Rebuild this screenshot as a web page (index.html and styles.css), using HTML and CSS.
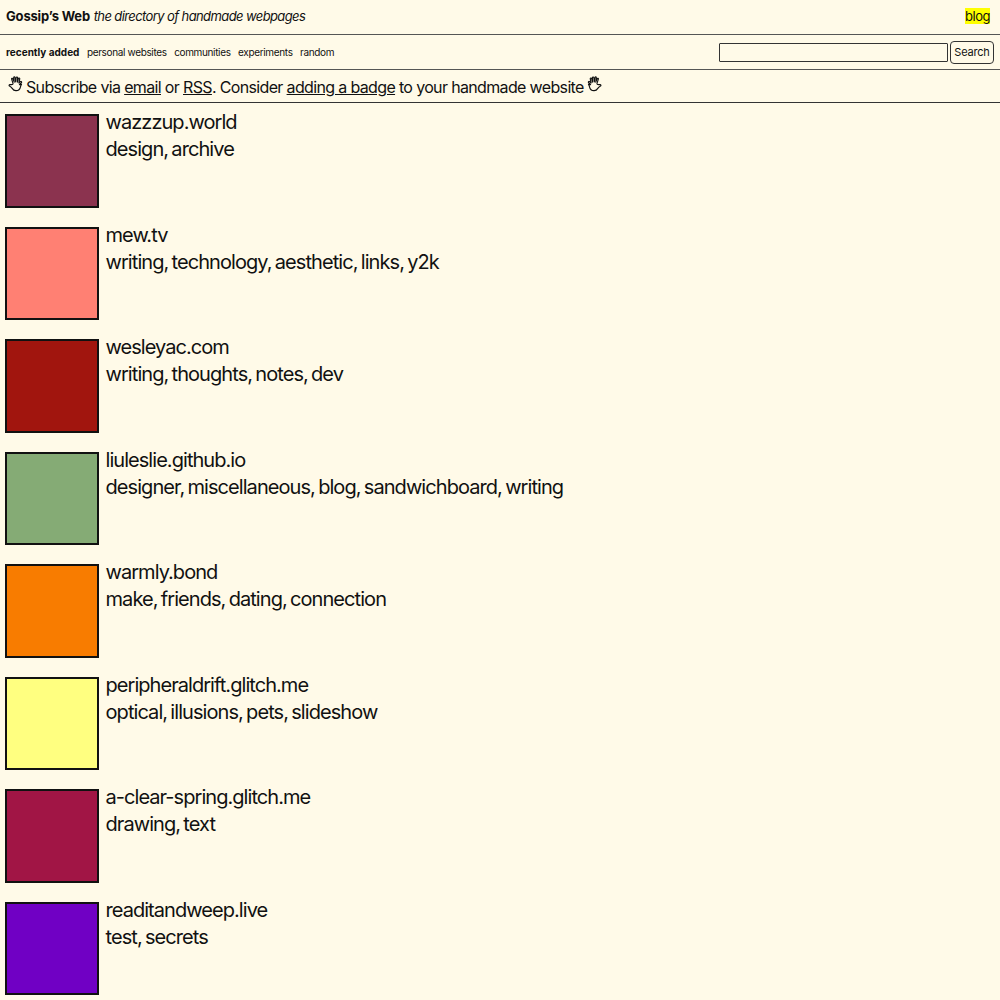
FILE: index.html
```html
<!DOCTYPE html>
<html lang="en">
<head>
<meta charset="utf-8">
<title>Gossip's Web</title>
<link rel="stylesheet" href="styles.css">
</head>
<body>
<header class="top">
  <div class="brand"><a class="name" href="#">Gossip’s Web</a> <em class="tagline">the directory of handmade webpages</em></div>
  <a class="blog" href="#">blog</a>
</header>
<nav class="nav">
  <ul class="tabs">
    <li><a class="active" href="#">recently added</a></li>
    <li><a href="#">personal websites</a></li>
    <li><a href="#">communities</a></li>
    <li><a href="#">experiments</a></li>
    <li><a href="#">random</a></li>
  </ul>
  <form class="search">
    <input class="search-input" type="text" aria-label="Search">
    <button class="search-btn" type="button">Search</button>
  </form>
</nav>
<div class="notice">
  <svg class="hand flip" viewBox="0 0 16 16" aria-hidden="true"><path d="M3.2 8.6 1.5 6.9c-.8-.8.2-1.6.9-1L3.700 7.100 2.900 3.500c-.2-.9 1-1.100 1.200-.3l.9 3.100-.2-3.900c0-.9 1.200-.9 1.300 0l.4 3.700.6-3.900c.1-.9 1.300-.7 1.200.2l-.5 3.900 1.200-3c.3-.8 1.400-.4 1.100.4l-1.200 3.700c-.1.500.1 1 .6 1.100.8.100 1.500 0 2.100 0 .8 0 1.100.9.400 1.200-1 .5-1.800 1.200-2.400 2.200-.8 1.300-1.900 2.100-3.500 2-2-.1-3.400-1.300-3.800-3.200-.2-.9-.5-1.700-1-2.400z"/></svg>
  <span>Subscribe via <a href="#">email</a> or <a href="#">RSS</a>. Consider <a href="#">adding a badge</a> to your handmade website</span>
  <svg class="hand" viewBox="0 0 16 16" aria-hidden="true"><path d="M3.2 8.6 1.5 6.9c-.8-.8.2-1.6.9-1L3.700 7.100 2.900 3.500c-.2-.9 1-1.100 1.200-.3l.9 3.100-.2-3.900c0-.9 1.200-.9 1.300 0l.4 3.700.6-3.900c.1-.9 1.300-.7 1.200.2l-.5 3.900 1.200-3c.3-.8 1.400-.4 1.100.4l-1.200 3.700c-.1.500.1 1 .6 1.100.8.100 1.500 0 2.100 0 .8 0 1.100.9.400 1.200-1 .5-1.800 1.200-2.400 2.200-.8 1.300-1.900 2.100-3.500 2-2-.1-3.400-1.300-3.800-3.200-.2-.9-.5-1.700-1-2.400z"/></svg>
</div>
<main class="list">
  <article class="site"><a class="swatch c1" href="#"></a><div class="info"><a href="#">wazzzup.world</a><p>design, archive</p></div></article>
  <article class="site"><a class="swatch c2" href="#"></a><div class="info"><a href="#">mew.tv</a><p>writing, technology, aesthetic, links, y2k</p></div></article>
  <article class="site"><a class="swatch c3" href="#"></a><div class="info"><a href="#">wesleyac.com</a><p>writing, thoughts, notes, dev</p></div></article>
  <article class="site"><a class="swatch c4" href="#"></a><div class="info"><a href="#">liuleslie.github.io</a><p>designer, miscellaneous, blog, sandwichboard, writing</p></div></article>
  <article class="site"><a class="swatch c5" href="#"></a><div class="info"><a href="#">warmly.bond</a><p>make, friends, dating, connection</p></div></article>
  <article class="site"><a class="swatch c6" href="#"></a><div class="info"><a href="#">peripheraldrift.glitch.me</a><p>optical, illusions, pets, slideshow</p></div></article>
  <article class="site"><a class="swatch c7" href="#"></a><div class="info"><a href="#">a-clear-spring.glitch.me</a><p>drawing, text</p></div></article>
  <article class="site"><a class="swatch c8" href="#"></a><div class="info"><a href="#">readitandweep.live</a><p>test, secrets</p></div></article>
</main>
</body>
</html>
```

FILE: styles.css
```css
* { box-sizing: border-box; }
html, body { margin: 0; padding: 0; }
body {
  background: #fffae8;
  color: #111;
  font-family: Inter, "Liberation Sans", sans-serif;
  overflow: hidden;
}
a { color: inherit; text-decoration: none; }

.top {
  height: 35px;
  padding: 0 10px 2px 6px;
  display: flex;
  justify-content: space-between;
  align-items: center;
  font-size: 13px;
  border-bottom: 1px solid #555;
}
.name { font-weight: 700; letter-spacing: -0.17px; }
.tagline { letter-spacing: -0.6px; }
.blog { background: #ff0; letter-spacing: -0.5px; }

.nav {
  height: 35px;
  padding: 0 6px;
  display: flex;
  justify-content: space-between;
  align-items: center;
  border-bottom: 1px solid #555;
}
.tabs {
  list-style: none;
  margin: 0;
  padding: 0;
  display: flex;
  gap: 7.500px;
  font-size: 10px;
  letter-spacing: -0.35px;
}
.tabs .active { font-weight: 700; letter-spacing: 0; }
.search { display: flex; align-items: center; gap: 2px; }
.search-input {
  width: 229px;
  height: 19px;
  padding: 0;
  background: transparent;
  border: 1px solid #333;
  border-radius: 1px;
}
.search-btn {
  width: 44px;
  height: 23px;
  padding: 0;
  background: transparent;
  border: 1px solid #333;
  border-radius: 4px;
  color: #111;
  font: 11px Inter, "Liberation Sans", sans-serif;
  letter-spacing: -0.2px;
}

.notice {
  height: 33px;
  padding: 1px 6px 0;
  display: flex;
  align-items: center;
  gap: 2px;
  font-size: 16px;
  letter-spacing: -0.65px;
  border-bottom: 1px solid #333;
}
.notice a { text-decoration: underline; }
.hand {
  width: 18px;
  height: 18px;
  margin-top: -5px;
  fill: none;
  stroke: #111;
  stroke-width: 1;
  stroke-linejoin: round;
}
.hand:last-child { margin-left: 1px; }
.flip { margin-left: -1px; margin-right: 1px; transform: scaleX(-1); }

.list {
  padding: 11px 5px 0;
  display: flex;
  flex-direction: column;
  gap: 19.500px;
}
.site { display: flex; gap: 8px; height: 93px; }
.swatch { flex: none; width: 93.500px; height: 93.500px; border: 2px solid #111; }
.info { font-size: 20px; line-height: 27.250px; letter-spacing: -0.95px; margin-top: -5px; margin-left: -1px; }
.info a { display: block; }
.info p { margin: 0; word-spacing: -1.500px; letter-spacing: -0.93px; }

.c1 { background: #8b334f; }
.c2 { background: #ff8073; }
.c3 { background: #a1150e; }
.c4 { background: #85ab75; }
.c5 { background: #f87c00; }
.c6 { background: #ffff80; }
.c7 { background: #a11545; }
.c8 { background: #7000c4; }
```
